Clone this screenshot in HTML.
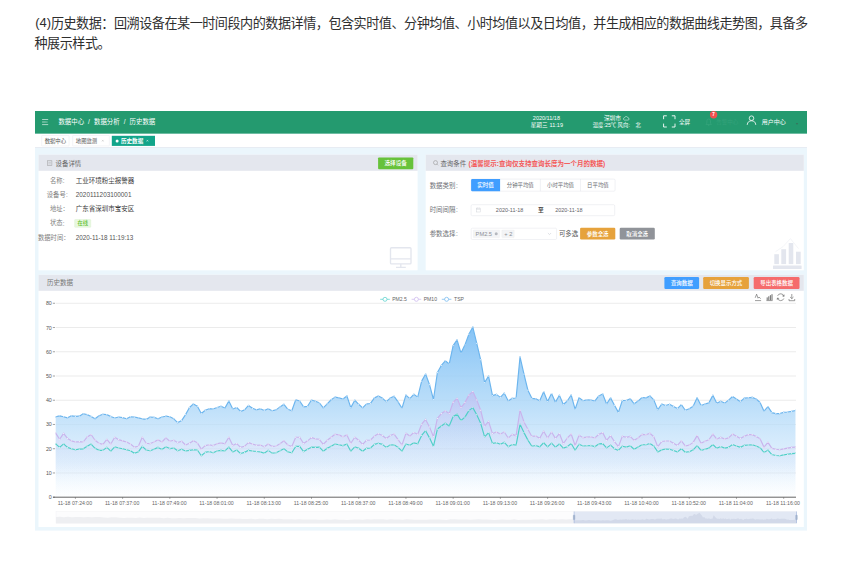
<!DOCTYPE html>
<html lang="zh"><head><meta charset="utf-8"><title>历史数据</title>
<style>
html,body{margin:0;padding:0;background:#fff;}
body{position:relative;width:844px;height:563px;overflow:hidden;font-family:"Liberation Sans","Noto Sans CJK SC",sans-serif;}
svg{display:block;}
svg text{font-family:"Liberation Sans","Noto Sans CJK SC",sans-serif;}
.sr{position:absolute;left:0;top:0;width:1px;height:1px;overflow:hidden;opacity:0;font-size:1px;line-height:1px;color:transparent;white-space:nowrap;}
</style></head><body>
<div class="sr">
<p>(4)历史数据：回溯设备在某一时间段内的数据详情，包含实时值、分钟均值、小时均值以及日均值，并生成相应的数据曲线走势图，具备多种展示样式。</p>
<p>数据中心 / 数据分析 / 历史数据 2020/11/18 星期三 11:19 深圳市 温度:25℃ 风向: 北 全屏 告警中心 7 用户中心</p>
<p>数据中心 地图监测 历史数据</p>
<p>设备详情 选择设备 名称: 工业环境粉尘报警器 设备号: 2020111203100001 地址： 广东省深圳市宝安区 状态: 在线 数据时间： 2020-11-18 11:19:13</p>
<p>查询条件 (温馨提示:查询仅支持查询长度为一个月的数据) 数据类别: 实时值 分钟平均值 小时平均值 日平均值 时间间隔: 2020-11-18 至 2020-11-18 参数选择: PM2.5 + 2 可多选 参数全选 取消全选</p>
<p>历史数据 查询数据 切换显示方式 导出表格数据 PM2.5 PM10 TSP 80 70 60 50 40 30 20 10 0</p>
<p>11-18 07:24:00 11-18 07:37:00 11-18 07:49:00 11-18 08:01:00 11-18 08:13:00 11-18 08:25:00 11-18 08:37:00 11-18 08:49:00 11-18 09:01:00 11-18 09:13:00 11-18 09:26:00 11-18 09:43:00 11-18 10:40:00 11-18 10:52:00 11-18 11:04:00 11-18 11:16:00</p>
</div>
<svg width="844" height="563" viewBox="0 0 844 563">
<defs><linearGradient id="ga" gradientUnits="userSpaceOnUse" x1="0" y1="327" x2="0" y2="497"><stop offset="0" stop-color="#7fc0f5" stop-opacity=".95"/><stop offset=".45" stop-color="#aad6f8" stop-opacity=".8"/><stop offset=".8" stop-color="#cfe7fc" stop-opacity=".6"/><stop offset="1" stop-color="#e8f4fe" stop-opacity=".05"/></linearGradient><linearGradient id="gb" gradientUnits="userSpaceOnUse" x1="0" y1="390" x2="0" y2="480"><stop offset="0" stop-color="#c5a9ee" stop-opacity=".45"/><stop offset="1" stop-color="#e9e0fa" stop-opacity="0"/></linearGradient><linearGradient id="gc" gradientUnits="userSpaceOnUse" x1="0" y1="407" x2="0" y2="497"><stop offset="0" stop-color="#8fc8f0" stop-opacity=".3"/><stop offset="1" stop-color="#dff0fa" stop-opacity="0"/></linearGradient><marker id="ma" markerWidth="2" markerHeight="2" refX="1" refY="1" markerUnits="userSpaceOnUse"><circle cx="1" cy="1" r=".68" fill="#fff" stroke="#6cb5ee" stroke-width=".25"/></marker><marker id="mb" markerWidth="2" markerHeight="2" refX="1" refY="1" markerUnits="userSpaceOnUse"><circle cx="1" cy="1" r=".68" fill="#fff" stroke="#c9b3ec" stroke-width=".25"/></marker><marker id="mc" markerWidth="2" markerHeight="2" refX="1" refY="1" markerUnits="userSpaceOnUse"><circle cx="1" cy="1" r=".68" fill="#fff" stroke="#4fcfc8" stroke-width=".25"/></marker></defs>
<g id="heading" aria-label="(4)历史数据：回溯设备在某一时间段内的数据详情，包含实时值、分钟均值、小时均值以及日均值，并生成相应的数据曲线走势图，具备多种展示样式。">
<text x="35.2" y="27.49" font-size="13" fill="#2e2e2e">(4)</text>
<text x="50.9" y="27.53" font-size="13.1" fill="#2e2e2e" letter-spacing="-0.48">历史数据：回溯设备在某一时间段内的数据详情，包含实时值、分钟均值、小时均值以及日均值，并生成相应的数据曲线走势图，具备多</text>
<text x="34.5" y="47.93" font-size="13.1" fill="#2e2e2e" letter-spacing="-0.48">种展示样式。</text>
</g>
<g id="shot">
<rect x="35" y="111" width="772" height="419.6" fill="#ebf6fc"/>
<rect x="35" y="111" width="772" height="22.8" fill="#249a6f"/>
<rect x="35" y="133.8" width="772" height="14" fill="#fff"/>
<rect x="35" y="147.2" width="772" height="0.8" fill="#e3e8f1"/>
<path d="M42.100 119.500h6.100M42.100 122h3.800M46.900 121.400v1.300M42.100 124.600h6.100" stroke="#fff" stroke-width=".75" fill="none" opacity=".8"/>
<text x="58.4" y="124.14" font-size="6.43" fill="#fff">数据中心</text>
<text x="87.9" y="124.14" font-size="6.43" fill="#fff">/</text>
<text x="94" y="124.14" font-size="6.43" fill="#fff">数据分析</text>
<text x="123.7" y="124.14" font-size="6.43" fill="#fff">/</text>
<text x="129.6" y="124.14" font-size="6.43" fill="#fff">历史数据</text>
<text x="532.84" y="120.17" font-size="5.5" fill="#fff">2020/11/18</text>
<text x="530.7" y="127.03" font-size="5.6" fill="#fff">星期三</text>
<text x="549.6" y="126.87" font-size="5.5" fill="#fff">11:19</text>
<text x="603.9" y="120.37" font-size="5.7" fill="#fff">深圳市</text>
<path d="M624.300 120.100h3.700a1.100 1.100 0 0 0 0-2.200a1.800 1.800 0 0 0-3.400-.3a1.300 1.300 0 0 0-.3 2.500z" fill="none" stroke="#fff" stroke-width=".5"/>
<text x="592.8" y="126.91" font-size="5.3" fill="#fff">温度</text>
<text x="603.6" y="126.83" font-size="5.4" fill="#fff">:25</text>
<text x="610.9" y="126.91" font-size="5.3" fill="#fff">℃</text>
<text x="617.6" y="126.91" font-size="5.3" fill="#fff">风向</text>
<text x="628.4" y="126.83" font-size="5.4" fill="#fff">:</text>
<text x="635.4" y="126.91" font-size="5.3" fill="#fff">北</text>
<path d="M663.6 119.2v-3.4h3.2M671.8 115.8h3.2v3.4M675 123.6v3.4h-3.2M666.8 127h-3.2v-3.4" fill="none" stroke="#fff" stroke-width=".9"/>
<text x="679" y="124.13" font-size="5.6" fill="#fff">全屏</text>
<path d="M706 124.4h5.4l-.9-1.2v-2.4a1.8 1.8 0 0 0-3.6 0v2.4zM708 125.3h1.4" fill="none" stroke="#3aa780" stroke-width=".6"/>
<text x="716.2" y="124.29" font-size="5.5" fill="#34a27b">告警中心</text>
<circle cx="713.6" cy="114.7" r="3.7" fill="#f0504f"/>
<text x="712.32" y="116.45" font-size="4.6" font-weight="bold" fill="#fff">7</text>
<circle cx="751.5" cy="118.2" r="2.3" fill="none" stroke="#fff" stroke-width=".8"/><path d="M747.2 124.9c.3-3 2-4.1 4.3-4.1s4 1.100 4.300 4.100" fill="none" stroke="#fff" stroke-width=".8"/>
<text x="761.8" y="123.68" font-size="6" fill="#fff">用户中心</text>
<path d="M795.8 123.2h2.400l-1.200 1.500z" fill="#3a6b58"/>
<rect x="41.7" y="135.5" width="27.4" height="10.4" rx="0.4" fill="#fff" stroke="#e2e5ea" stroke-width="0.4"/>
<text x="44.7" y="142.73" font-size="5.35" fill="#555">数据中心</text>
<rect x="72.7" y="135.5" width="36.7" height="10.4" rx="0.4" fill="#fff" stroke="#e2e5ea" stroke-width="0.4"/>
<text x="75.8" y="142.73" font-size="5.35" fill="#555">地图监测</text>
<path d="M102 139.9l1.6 1.600m0-1.600l-1.600 1.600" stroke="#aaa" stroke-width=".4"/>
<rect x="111.8" y="135.8" width="43.2" height="10.1" fill="#12a58a"/>
<circle cx="117.100" cy="140.9" r="1.500" fill="#fff"/>
<text x="121" y="143.01" font-size="5.55" font-weight="bold" fill="#fff">历史数据</text>
<path d="M146.600 139.9l1.600 1.600m0-1.600l-1.600 1.600" stroke="#fff" stroke-width=".45"/>
<rect x="38.5" y="154.8" width="379.1" height="115.5" fill="#fff"/>
<rect x="38.5" y="154.8" width="379.1" height="16" fill="#e4e7ee"/>
<rect x="425.7" y="154.8" width="378.1" height="115.5" fill="#fff"/>
<rect x="425.7" y="154.8" width="378.1" height="16" fill="#e4e7ee"/>
<rect x="38.5" y="274.7" width="765.3" height="252.3" fill="#fff"/>
<rect x="38.5" y="274.8" width="765.3" height="16" fill="#e4e7ee"/>
<rect x="47.300" y="160.8" width="4.600" height="4.600" fill="none" stroke="#999" stroke-width=".5"/><path d="M48.300 162.300h2.600M48.300 163.900h2.600" stroke="#999" stroke-width=".4"/>
<text x="55.6" y="165.54" font-size="6.43" fill="#666">设备详情</text>
<rect x="378.1" y="157.4" width="35.2" height="11.8" rx="0.9" fill="#67c23a"/>
<text x="384.5" y="165.43" font-size="5.6" font-weight="500" fill="#fff">选择设备</text>
<text x="49.9" y="182.89" font-size="6.3" fill="#808080">名称</text>
<text x="62.8" y="182.96" font-size="6.3" fill="#808080">:</text>
<text x="75.8" y="182.97" font-size="6.5" fill="#3a3a3a">工业环境粉尘报警器</text>
<text x="46.8" y="197.09" font-size="6.3" fill="#808080">设备号</text>
<text x="65.9" y="197.16" font-size="6.3" fill="#808080">:</text>
<text x="75.8" y="197.08" font-size="6.36" fill="#505050">2020111203100001</text>
<text x="49.9" y="211.29" font-size="6.3" fill="#808080">地址：</text>
<text x="75.8" y="211.37" font-size="6.5" fill="#3a3a3a">广东省深圳市宝安区</text>
<text x="49.9" y="225.49" font-size="6.3" fill="#808080">状态</text>
<text x="62.8" y="225.56" font-size="6.3" fill="#808080">:</text>
<rect x="74.6" y="219.5" width="16.2" height="7.8" rx="0.6" fill="#e8f7e0" stroke="#cfeebd" stroke-width="0.3"/>
<text x="77.4" y="225.41" font-size="5.3" font-weight="500" fill="#5fbf30">在线</text>
<text x="38" y="239.69" font-size="6.3" fill="#808080">数据时间：</text>
<text x="75.8" y="239.66" font-size="6.3" fill="#555">2020-11-18 11:19:13</text>
<g fill="none" stroke="#e3e6ee" stroke-width="1.350"><rect x="390.5" y="247.700" width="20.5" height="16.200" rx="1"/><path d="M390.5 258.8h20.5M400.8 264v3.300M396 267.400h9.800"/></g>
<g fill="#e3e6ee"><rect x="773" y="265.400" width="28.600" height="3.700" rx=".5"/><rect x="774.300" y="254.200" width="4.600" height="9.900"/><rect x="781.300" y="249.200" width="4.800" height="14.900"/><rect x="788.700" y="243" width="4.600" height="21.100"/><rect x="796" y="251.700" width="4.700" height="12.400"/></g>
<path d="M775.5 251.700l7.500-5l7.400-8.100l8.100 10" fill="none" stroke="#e9ebf1" stroke-width=".5"/>
<circle cx="435.500" cy="162.600" r="2" fill="none" stroke="#888" stroke-width=".5"/><path d="M436.900 164.100l1.200 1.200" stroke="#888" stroke-width=".5"/>
<text x="440.4" y="165.74" font-size="6.43" fill="#666">查询条件</text>
<text x="468.6" y="165.87" font-size="6.5" font-weight="bold" fill="#f45858">(温馨提示:查询仅支持查询长度为一个月的数据)</text>
<text x="429.7" y="187.64" font-size="6.43" fill="#707277">数据类别</text>
<text x="456" y="187.66" font-size="6.3" fill="#707277">:</text>
<text x="429.7" y="211.94" font-size="6.43" fill="#707277">时间间隔</text>
<text x="456" y="211.96" font-size="6.3" fill="#707277">:</text>
<text x="429.7" y="236.14" font-size="6.43" fill="#707277">参数选择</text>
<text x="456" y="236.16" font-size="6.3" fill="#707277">:</text>
<rect x="471.1" y="179.1" width="144" height="12.1" rx="1.2" fill="#fff" stroke="#dcdfe6" stroke-width="0.4"/>
<path d="M540.400 179.100v12.100M580.5 179.100v12.100" stroke="#dcdfe6" stroke-width=".4"/>
<path d="M472.300 179.100h27.800v12.100h-27.800a1.200 1.200 0 0 1-1.200-1.200v-9.700a1.200 1.200 0 0 1 1.200-1.200z" fill="#409eff"/>
<text x="477.35" y="187.29" font-size="5.5" font-weight="500" fill="#fff">实时值</text>
<text x="506.8" y="187.25" font-size="5.4" fill="#6b6e74">分钟平均值</text>
<text x="547" y="187.25" font-size="5.4" fill="#6b6e74">小时平均值</text>
<text x="587.1" y="187.25" font-size="5.4" fill="#6b6e74">日平均值</text>
<rect x="471.1" y="204.7" width="143.6" height="11" rx="1.2" fill="#fff" stroke="#dcdfe6" stroke-width="0.4"/>
<g fill="none" stroke="#cdd0d6" stroke-width=".45"><rect x="476.400" y="208.100" width="3.800" height="3.900"/><path d="M476.400 209.400h3.800M477.400 207.500v1.200M479.200 207.500v1.200"/></g>
<text x="495.86" y="212.25" font-size="5.45" fill="#5f6268">2020-11-18</text>
<text x="538.05" y="212.37" font-size="5.7" font-weight="bold" fill="#444">至</text>
<text x="555.16" y="212.25" font-size="5.45" fill="#5f6268">2020-11-18</text>
<rect x="471.2" y="228.2" width="85.4" height="11.3" rx="1.2" fill="#fff" stroke="#dcdfe6" stroke-width="0.4"/>
<rect x="473.3" y="229.9" width="26.4" height="7.8" rx="0.7" fill="#f3f4f6" stroke="#e9e9eb" stroke-width="0.3"/>
<text x="475.6" y="235.94" font-size="5.7" fill="#8c8f95">PM2.5</text>
<circle cx="496.200" cy="233.8" r="1.500" fill="#b5b8be"/>
<rect x="501.8" y="229.9" width="12.4" height="7.8" rx="0.7" fill="#f3f4f6" stroke="#e9e9eb" stroke-width="0.3"/>
<text x="504.36" y="235.94" font-size="5.7" fill="#8c8f95">+ 2</text>
<path d="M547.900 233l1.600 1.600l1.600-1.600" fill="none" stroke="#c0c4cc" stroke-width=".5"/>
<text x="558.9" y="235.94" font-size="6.43" fill="#555">可多选</text>
<rect x="580.1" y="227.7" width="35.2" height="11.8" rx="1.2" fill="#e6a23c"/>
<text x="586.8" y="235.77" font-size="5.45" font-weight="500" fill="#fff">参数全选</text>
<rect x="619.7" y="227.7" width="35.1" height="11.8" rx="1.2" fill="#909399"/>
<text x="626.3" y="235.77" font-size="5.45" font-weight="500" fill="#fff">取消全选</text>
<text x="46.9" y="285.39" font-size="6.55" fill="#777">历史数据</text>
<rect x="664.4" y="277.1" width="34.7" height="11.9" rx="1.2" fill="#409eff"/>
<text x="670.9" y="285.17" font-size="5.45" font-weight="500" fill="#fff">查询数据</text>
<rect x="703.2" y="277.1" width="45.7" height="11.9" rx="1.2" fill="#e6a23c"/>
<text x="709.65" y="285.17" font-size="5.45" font-weight="500" fill="#fff">切换显示方式</text>
<rect x="753.7" y="277.1" width="45.8" height="11.9" rx="1.2" fill="#f56c6c"/>
<text x="760.25" y="285.17" font-size="5.45" font-weight="500" fill="#fff">导出表格数据</text>
<path d="M55.7 472.96H796" stroke="#d6d6d6" stroke-width=".5"/>
<path d="M55.7 448.72H796" stroke="#d6d6d6" stroke-width=".5"/>
<path d="M55.7 424.48H796" stroke="#d6d6d6" stroke-width=".5"/>
<path d="M55.7 400.24H796" stroke="#d6d6d6" stroke-width=".5"/>
<path d="M55.7 376H796" stroke="#d6d6d6" stroke-width=".5"/>
<path d="M55.7 351.76H796" stroke="#d6d6d6" stroke-width=".5"/>
<path d="M55.7 327.52H796" stroke="#d6d6d6" stroke-width=".5"/>
<path d="M55.7 303.28H796" stroke="#d6d6d6" stroke-width=".5"/>
<text x="48.85" y="499.2" font-size="5.3" fill="#555">0</text>
<path d="M52.800 497.2h2.200" stroke="#666" stroke-width=".6"/>
<text x="45.9" y="474.96" font-size="5.3" fill="#555">10</text>
<path d="M52.800 472.96h2.200" stroke="#666" stroke-width=".6"/>
<text x="45.9" y="450.72" font-size="5.3" fill="#555">20</text>
<path d="M52.800 448.72h2.200" stroke="#666" stroke-width=".6"/>
<text x="45.9" y="426.48" font-size="5.3" fill="#555">30</text>
<path d="M52.800 424.48h2.200" stroke="#666" stroke-width=".6"/>
<text x="45.9" y="402.24" font-size="5.3" fill="#555">40</text>
<path d="M52.800 400.24h2.200" stroke="#666" stroke-width=".6"/>
<text x="45.9" y="378" font-size="5.3" fill="#555">50</text>
<path d="M52.800 376h2.200" stroke="#666" stroke-width=".6"/>
<text x="45.9" y="353.76" font-size="5.3" fill="#555">60</text>
<path d="M52.800 351.76h2.200" stroke="#666" stroke-width=".6"/>
<text x="45.9" y="329.52" font-size="5.3" fill="#555">70</text>
<path d="M52.800 327.52h2.200" stroke="#666" stroke-width=".6"/>
<text x="45.9" y="305.28" font-size="5.3" fill="#555">80</text>
<path d="M52.800 303.28h2.200" stroke="#666" stroke-width=".6"/>
<path d="M55.7 497.2 L55.7 416.79 59.64 415.83 63.57 416.79 67.5 417.86 71.44 415.83 75.38 416.43 79.31 416.19 83.25 413.81 87.18 414.64 91.12 416.43 95.05 418.81 98.99 415.83 102.92 414.29 106.86 414.64 110.79 416.43 114.72 417.98 118.66 417.02 122.59 417.62 126.53 418.81 130.47 416.79 134.4 417.02 138.34 417.86 142.27 418.81 146.2 419.4 150.14 417.02 154.07 417.38 158.01 418.81 161.94 417.02 165.88 416.19 169.81 416.79 173.75 418.81 177.69 422.62 181.62 420.6 185.56 414.64 189.49 407.5 193.43 403.93 197.36 406.31 201.3 413.45 205.23 410.24 209.17 408.69 213.1 409.05 217.04 407.5 220.97 406.31 224.91 408.1 228.84 400.95 232.77 409.05 236.71 407.5 240.64 411.43 244.58 409.88 248.51 405.48 252.45 408.33 256.38 409.88 260.32 408.69 264.25 410.48 268.19 408.69 272.12 410.71 276.06 409.88 280 406.9 283.93 404.29 287.87 409.29 291.8 410.71 295.74 399.76 299.67 400.95 303.61 406.9 307.54 406.31 311.48 400 315.41 401.19 319.34 402.74 323.28 407.86 327.21 403.93 331.15 399.76 335.08 397.14 339.02 397.86 342.95 399.05 346.89 395.95 350.82 407.62 354.76 400.24 358.69 404.29 362.63 407.86 366.56 403.81 370.5 403.45 374.44 397.86 378.37 395.95 382.31 398.1 386.24 401.67 390.18 398.1 394.11 396.31 398.05 401.9 401.98 408.21 405.92 395.12 409.85 398.69 413.78 394.29 417.72 397.14 421.65 381.12 425.59 374.01 429.52 384.67 433.46 399.5 437.39 372.59 441.33 365.48 445.26 360.78 449.2 364.05 453.13 345.57 457.07 339.88 461 353.11 464.94 344.86 468.88 334.2 472.81 327.09 476.75 343.44 480.68 359.79 484.62 382.54 488.55 376.14 492.49 395.6 496.42 394.4 500.36 397.38 504.29 393.21 508.23 400.95 512.16 398.33 516.1 397.98 520.03 356.9 523.97 374.17 527.9 390.24 531.84 398.33 535.77 398.81 539.71 400.71 543.64 391.67 547.58 401.55 551.51 393.57 555.45 402.14 559.38 395.24 563.32 404.52 567.25 400.95 571.19 395 575.12 409.29 579.06 397.62 582.99 400.71 586.93 399.76 590.86 400 594.8 401.07 598.73 395.95 602.67 393.93 606.6 404.05 610.54 397.86 614.47 405.24 618.41 412.38 622.34 400.48 626.28 400.48 630.21 398.69 634.15 403.81 638.08 401.07 642.02 397.5 645.95 397.86 649.89 395.95 653.82 399.88 657.76 409.76 661.69 404.05 665.62 405.48 669.56 404.29 673.5 406.43 677.43 408.57 681.37 404.64 685.3 410.24 689.24 408.81 693.17 406.19 697.11 397.86 701.04 405.48 704.98 404.05 708.91 402.86 712.85 395.36 716.78 403.33 720.72 401.31 724.65 403.1 728.59 400.12 732.52 396.55 736.46 398.93 740.39 401.67 744.33 398.1 748.26 397.74 752.2 397.38 756.13 398.93 760.07 402.5 764 411.19 767.94 406.67 771.87 412.62 775.81 413.57 779.74 413.57 783.68 412.38 787.61 412.02 791.55 411.43 795.48 410.48 L795.48 497.2z" fill="url(#ga)"/>
<path d="M55.7 497.2 L55.7 433.1 59.64 439.29 63.57 433.33 67.5 438.45 71.44 440.83 75.38 442.02 79.31 441.67 83.25 442.02 87.18 436.9 91.12 434.52 95.05 440.24 98.99 443.21 102.92 444.4 106.86 439.29 110.79 444.05 114.72 437.26 118.66 439.64 122.59 440.83 126.53 442.02 130.47 444.05 134.4 447.14 138.34 446.19 142.27 437.26 146.2 443.21 150.14 443.57 154.07 442.02 158.01 439.64 161.94 442.02 165.88 437.86 169.81 441.19 173.75 440.24 177.69 442.62 181.62 441.19 185.56 445 189.49 443.21 193.43 440.83 197.36 442.86 201.3 449.17 205.23 445.6 209.17 444.76 213.1 445.6 217.04 443.81 220.97 442.86 224.91 443.81 228.84 437.26 232.77 445.6 236.71 443.57 240.64 447.38 244.58 446.19 248.51 442.62 252.45 444.05 256.38 445.24 260.32 445 264.25 446.79 268.19 444.05 272.12 446.43 276.06 445.95 280 443.81 283.93 440.83 287.87 445 291.8 446.43 295.74 437.26 299.67 437.26 303.61 443.57 307.54 440.83 311.48 437.62 315.41 438.81 319.34 439.29 323.28 444.4 327.21 440.24 331.15 437.26 335.08 434.29 339.02 434.88 342.95 436.67 346.89 434.88 350.82 443.21 354.76 437.26 358.69 440.24 362.63 444.4 366.56 440.24 370.5 440 374.44 436.07 378.37 433.69 382.31 435.48 386.24 438.45 390.18 435.48 394.11 434.05 398.05 439.64 401.98 445 405.92 433.33 409.85 436.07 413.78 432.5 417.72 434.29 421.65 424.17 425.59 419.4 429.52 426.9 433.46 436.79 437.39 418.33 441.33 413.57 445.26 410.95 449.2 413.57 453.13 402.26 457.07 398.33 461 407.62 464.94 402.62 468.88 395.12 472.81 391.55 476.75 399.88 480.68 410.24 484.62 426.07 488.55 421.31 492.49 433.57 496.42 432.02 500.36 434.05 504.29 432.02 508.23 437.98 512.16 434.4 516.1 435.6 520.03 410.24 523.97 421.9 527.9 429.29 531.84 436.43 535.77 435.95 539.71 438.33 543.64 431.19 547.58 437.98 551.51 432.02 555.45 438.33 559.38 433.57 563.32 443.57 567.25 437.98 571.19 434.05 575.12 445.48 579.06 435.24 582.99 437.62 586.93 437.14 590.86 436.79 594.8 437.98 598.73 434.4 602.67 432.62 606.6 440.36 610.54 435.6 614.47 441.55 618.41 446.67 622.34 436.19 626.28 437.38 630.21 436.43 634.15 440.36 638.08 437.98 642.02 434.4 645.95 434.76 649.89 433.21 653.82 436.79 657.76 446.67 661.69 441.55 665.62 440.95 669.56 440.95 673.5 443.33 677.43 445.48 681.37 440.95 685.3 445.95 689.24 445.12 693.17 442.38 697.11 435.6 701.04 443.33 704.98 441.19 708.91 439.76 712.85 434.05 716.78 439.05 720.72 437.38 724.65 439.05 728.59 437.86 732.52 434.05 736.46 436.19 740.39 438.57 744.33 436.19 748.26 434.64 752.2 434.64 756.13 436.43 760.07 438.81 764 447.14 767.94 442.38 771.87 448.33 775.81 449.29 779.74 449.76 783.68 448.93 787.61 448.1 791.55 447.38 795.48 447.14 L795.48 497.2z" fill="url(#gb)"/>
<path d="M55.7 497.2 L55.7 443.81 59.64 447.38 63.57 443.81 67.5 447.38 71.44 448.81 75.38 449.76 79.31 449.17 83.25 448.81 87.18 446.19 91.12 444.05 95.05 448.33 98.99 450.36 102.92 450.36 106.86 447.38 110.79 451.19 114.72 446.79 118.66 447.98 122.59 448.81 126.53 449.76 130.47 450.71 134.4 453.33 138.34 451.9 142.27 446.43 146.2 450 150.14 450.71 154.07 449.17 158.01 447.38 161.94 449.52 165.88 446.79 169.81 448.57 173.75 447.98 177.69 450.71 181.62 449.17 185.56 450.95 189.49 450.36 193.43 449.76 197.36 450 201.3 455.71 205.23 452.38 209.17 451.55 213.1 452.74 217.04 450.95 220.97 450.36 224.91 450.95 228.84 447.14 232.77 451.9 236.71 450 240.64 453.57 244.58 452.38 248.51 450.36 252.45 450.95 256.38 451.55 260.32 451.9 264.25 453.33 268.19 450.36 272.12 453.1 276.06 452.74 280 450.71 283.93 448.81 287.87 451.9 291.8 452.74 295.74 446.43 299.67 446.43 303.61 451.55 307.54 449.17 311.48 447.14 315.41 447.38 319.34 447.14 323.28 451.19 327.21 448.33 331.15 446.19 335.08 444.05 339.02 444.76 342.95 445.6 346.89 444.05 350.82 451.19 354.76 446.79 358.69 448.33 362.63 451.19 366.56 448.33 370.5 447.98 374.44 444.4 378.37 443.21 382.31 444.4 386.24 447.38 390.18 445 394.11 444.76 398.05 447.38 401.98 451.19 405.92 444.05 409.85 445.24 413.78 442.86 417.72 443.81 421.65 435.48 425.59 430.71 429.52 437.86 433.46 446.31 437.39 429.05 441.33 426.07 445.26 423.33 449.2 426.07 453.13 416.55 457.07 414.17 461 420.48 464.94 417.14 468.88 410.6 472.81 407.62 476.75 414.76 480.68 423.33 484.62 436.79 488.55 432.62 492.49 443.33 496.42 442.74 500.36 444.29 504.29 442.38 508.23 446.67 512.16 444.52 516.1 445.12 520.03 424.29 523.97 432.62 527.9 440.12 531.84 446.31 535.77 445.48 539.71 446.9 543.64 442.74 547.58 446.9 551.51 443.1 555.45 447.14 559.38 443.93 563.32 448.1 567.25 446.67 571.19 443.57 575.12 450.24 579.06 444.29 582.99 445.95 586.93 445.71 590.86 445.48 594.8 446.67 598.73 443.93 602.67 443.57 606.6 447.86 610.54 445.12 614.47 448.69 618.41 450.48 622.34 446.19 626.28 447.14 630.21 445.71 634.15 449.29 638.08 446.9 642.02 444.76 645.95 444.76 649.89 443.57 653.82 445.95 657.76 451.9 661.69 449.88 665.62 449.05 669.56 449.29 673.5 450.48 677.43 451.9 681.37 448.69 685.3 452.26 689.24 451.67 693.17 449.88 697.11 445.71 701.04 450.48 704.98 449.29 708.91 448.1 712.85 444.52 716.78 448.33 720.72 446.55 724.65 448.1 728.59 447.38 732.52 444.52 736.46 445.95 740.39 447.38 744.33 445.36 748.26 445 752.2 444.76 756.13 445.95 760.07 447.74 764 452.5 767.94 450.12 771.87 454.52 775.81 455.48 779.74 455.71 783.68 454.88 787.61 454.29 791.55 453.69 795.48 453.33 L795.48 497.2z" fill="url(#gc)"/>
<polyline points="55.7,416.79 59.64,415.83 63.57,416.79 67.5,417.86 71.44,415.83 75.38,416.43 79.31,416.19 83.25,413.81 87.18,414.64 91.12,416.43 95.05,418.81 98.99,415.83 102.92,414.29 106.86,414.64 110.79,416.43 114.72,417.98 118.66,417.02 122.59,417.62 126.53,418.81 130.47,416.79 134.4,417.02 138.34,417.86 142.27,418.81 146.2,419.4 150.14,417.02 154.07,417.38 158.01,418.81 161.94,417.02 165.88,416.19 169.81,416.79 173.75,418.81 177.69,422.62 181.62,420.6 185.56,414.64 189.49,407.5 193.43,403.93 197.36,406.31 201.3,413.45 205.23,410.24 209.17,408.69 213.1,409.05 217.04,407.5 220.97,406.31 224.91,408.1 228.84,400.95 232.77,409.05 236.71,407.5 240.64,411.43 244.58,409.88 248.51,405.48 252.45,408.33 256.38,409.88 260.32,408.69 264.25,410.48 268.19,408.69 272.12,410.71 276.06,409.88 280,406.9 283.93,404.29 287.87,409.29 291.8,410.71 295.74,399.76 299.67,400.95 303.61,406.9 307.54,406.31 311.48,400 315.41,401.19 319.34,402.74 323.28,407.86 327.21,403.93 331.15,399.76 335.08,397.14 339.02,397.86 342.95,399.05 346.89,395.95 350.82,407.62 354.76,400.24 358.69,404.29 362.63,407.86 366.56,403.81 370.5,403.45 374.44,397.86 378.37,395.95 382.31,398.1 386.24,401.67 390.18,398.1 394.11,396.31 398.05,401.9 401.98,408.21 405.92,395.12 409.85,398.69 413.78,394.29 417.72,397.14 421.65,381.12 425.59,374.01 429.52,384.67 433.46,399.5 437.39,372.59 441.33,365.48 445.26,360.78 449.2,364.05 453.13,345.57 457.07,339.88 461,353.11 464.94,344.86 468.88,334.2 472.81,327.09 476.75,343.44 480.68,359.79 484.62,382.54 488.55,376.14 492.49,395.6 496.42,394.4 500.36,397.38 504.29,393.21 508.23,400.95 512.16,398.33 516.1,397.98 520.03,356.9 523.97,374.17 527.9,390.24 531.84,398.33 535.77,398.81 539.71,400.71 543.64,391.67 547.58,401.55 551.51,393.57 555.45,402.14 559.38,395.24 563.32,404.52 567.25,400.95 571.19,395 575.12,409.29 579.06,397.62 582.99,400.71 586.93,399.76 590.86,400 594.8,401.07 598.73,395.95 602.67,393.93 606.6,404.05 610.54,397.86 614.47,405.24 618.41,412.38 622.34,400.48 626.28,400.48 630.21,398.69 634.15,403.81 638.08,401.07 642.02,397.5 645.95,397.86 649.89,395.95 653.82,399.88 657.76,409.76 661.69,404.05 665.62,405.48 669.56,404.29 673.5,406.43 677.43,408.57 681.37,404.64 685.3,410.24 689.24,408.81 693.17,406.19 697.11,397.86 701.04,405.48 704.98,404.05 708.91,402.86 712.85,395.36 716.78,403.33 720.72,401.31 724.65,403.1 728.59,400.12 732.52,396.55 736.46,398.93 740.39,401.67 744.33,398.1 748.26,397.74 752.2,397.38 756.13,398.93 760.07,402.5 764,411.19 767.94,406.67 771.87,412.62 775.81,413.57 779.74,413.57 783.68,412.38 787.61,412.02 791.55,411.43 795.48,410.48" fill="none" stroke="#6cb5ee" stroke-width="1.15" stroke-linejoin="round" marker-start="url(#ma)" marker-mid="url(#ma)" marker-end="url(#ma)"/>
<polyline points="55.7,433.1 59.64,439.29 63.57,433.33 67.5,438.45 71.44,440.83 75.38,442.02 79.31,441.67 83.25,442.02 87.18,436.9 91.12,434.52 95.05,440.24 98.99,443.21 102.92,444.4 106.86,439.29 110.79,444.05 114.72,437.26 118.66,439.64 122.59,440.83 126.53,442.02 130.47,444.05 134.4,447.14 138.34,446.19 142.27,437.26 146.2,443.21 150.14,443.57 154.07,442.02 158.01,439.64 161.94,442.02 165.88,437.86 169.81,441.19 173.75,440.24 177.69,442.62 181.62,441.19 185.56,445 189.49,443.21 193.43,440.83 197.36,442.86 201.3,449.17 205.23,445.6 209.17,444.76 213.1,445.6 217.04,443.81 220.97,442.86 224.91,443.81 228.84,437.26 232.77,445.6 236.71,443.57 240.64,447.38 244.58,446.19 248.51,442.62 252.45,444.05 256.38,445.24 260.32,445 264.25,446.79 268.19,444.05 272.12,446.43 276.06,445.95 280,443.81 283.93,440.83 287.87,445 291.8,446.43 295.74,437.26 299.67,437.26 303.61,443.57 307.54,440.83 311.48,437.62 315.41,438.81 319.34,439.29 323.28,444.4 327.21,440.24 331.15,437.26 335.08,434.29 339.02,434.88 342.95,436.67 346.89,434.88 350.82,443.21 354.76,437.26 358.69,440.24 362.63,444.4 366.56,440.24 370.5,440 374.44,436.07 378.37,433.69 382.31,435.48 386.24,438.45 390.18,435.48 394.11,434.05 398.05,439.64 401.98,445 405.92,433.33 409.85,436.07 413.78,432.5 417.72,434.29 421.65,424.17 425.59,419.4 429.52,426.9 433.46,436.79 437.39,418.33 441.33,413.57 445.26,410.95 449.2,413.57 453.13,402.26 457.07,398.33 461,407.62 464.94,402.62 468.88,395.12 472.81,391.55 476.75,399.88 480.68,410.24 484.62,426.07 488.55,421.31 492.49,433.57 496.42,432.02 500.36,434.05 504.29,432.02 508.23,437.98 512.16,434.4 516.1,435.6 520.03,410.24 523.97,421.9 527.9,429.29 531.84,436.43 535.77,435.95 539.71,438.33 543.64,431.19 547.58,437.98 551.51,432.02 555.45,438.33 559.38,433.57 563.32,443.57 567.25,437.98 571.19,434.05 575.12,445.48 579.06,435.24 582.99,437.62 586.93,437.14 590.86,436.79 594.8,437.98 598.73,434.4 602.67,432.62 606.6,440.36 610.54,435.6 614.47,441.55 618.41,446.67 622.34,436.19 626.28,437.38 630.21,436.43 634.15,440.36 638.08,437.98 642.02,434.4 645.95,434.76 649.89,433.21 653.82,436.79 657.76,446.67 661.69,441.55 665.62,440.95 669.56,440.95 673.5,443.33 677.43,445.48 681.37,440.95 685.3,445.95 689.24,445.12 693.17,442.38 697.11,435.6 701.04,443.33 704.98,441.19 708.91,439.76 712.85,434.05 716.78,439.05 720.72,437.38 724.65,439.05 728.59,437.86 732.52,434.05 736.46,436.19 740.39,438.57 744.33,436.19 748.26,434.64 752.2,434.64 756.13,436.43 760.07,438.81 764,447.14 767.94,442.38 771.87,448.33 775.81,449.29 779.74,449.76 783.68,448.93 787.61,448.1 791.55,447.38 795.48,447.14" fill="none" stroke="#c9b3ec" stroke-width="1.15" stroke-linejoin="round" marker-start="url(#mb)" marker-mid="url(#mb)" marker-end="url(#mb)"/>
<polyline points="55.7,443.81 59.64,447.38 63.57,443.81 67.5,447.38 71.44,448.81 75.38,449.76 79.31,449.17 83.25,448.81 87.18,446.19 91.12,444.05 95.05,448.33 98.99,450.36 102.92,450.36 106.86,447.38 110.79,451.19 114.72,446.79 118.66,447.98 122.59,448.81 126.53,449.76 130.47,450.71 134.4,453.33 138.34,451.9 142.27,446.43 146.2,450 150.14,450.71 154.07,449.17 158.01,447.38 161.94,449.52 165.88,446.79 169.81,448.57 173.75,447.98 177.69,450.71 181.62,449.17 185.56,450.95 189.49,450.36 193.43,449.76 197.36,450 201.3,455.71 205.23,452.38 209.17,451.55 213.1,452.74 217.04,450.95 220.97,450.36 224.91,450.95 228.84,447.14 232.77,451.9 236.71,450 240.64,453.57 244.58,452.38 248.51,450.36 252.45,450.95 256.38,451.55 260.32,451.9 264.25,453.33 268.19,450.36 272.12,453.1 276.06,452.74 280,450.71 283.93,448.81 287.87,451.9 291.8,452.74 295.74,446.43 299.67,446.43 303.61,451.55 307.54,449.17 311.48,447.14 315.41,447.38 319.34,447.14 323.28,451.19 327.21,448.33 331.15,446.19 335.08,444.05 339.02,444.76 342.95,445.6 346.89,444.05 350.82,451.19 354.76,446.79 358.69,448.33 362.63,451.19 366.56,448.33 370.5,447.98 374.44,444.4 378.37,443.21 382.31,444.4 386.24,447.38 390.18,445 394.11,444.76 398.05,447.38 401.98,451.19 405.92,444.05 409.85,445.24 413.78,442.86 417.72,443.81 421.65,435.48 425.59,430.71 429.52,437.86 433.46,446.31 437.39,429.05 441.33,426.07 445.26,423.33 449.2,426.07 453.13,416.55 457.07,414.17 461,420.48 464.94,417.14 468.88,410.6 472.81,407.62 476.75,414.76 480.68,423.33 484.62,436.79 488.55,432.62 492.49,443.33 496.42,442.74 500.36,444.29 504.29,442.38 508.23,446.67 512.16,444.52 516.1,445.12 520.03,424.29 523.97,432.62 527.9,440.12 531.84,446.31 535.77,445.48 539.71,446.9 543.64,442.74 547.58,446.9 551.51,443.1 555.45,447.14 559.38,443.93 563.32,448.1 567.25,446.67 571.19,443.57 575.12,450.24 579.06,444.29 582.99,445.95 586.93,445.71 590.86,445.48 594.8,446.67 598.73,443.93 602.67,443.57 606.6,447.86 610.54,445.12 614.47,448.69 618.41,450.48 622.34,446.19 626.28,447.14 630.21,445.71 634.15,449.29 638.08,446.9 642.02,444.76 645.95,444.76 649.89,443.57 653.82,445.95 657.76,451.9 661.69,449.88 665.62,449.05 669.56,449.29 673.5,450.48 677.43,451.9 681.37,448.69 685.3,452.26 689.24,451.67 693.17,449.88 697.11,445.71 701.04,450.48 704.98,449.29 708.91,448.1 712.85,444.52 716.78,448.33 720.72,446.55 724.65,448.1 728.59,447.38 732.52,444.52 736.46,445.95 740.39,447.38 744.33,445.36 748.26,445 752.2,444.76 756.13,445.95 760.07,447.74 764,452.5 767.94,450.12 771.87,454.52 775.81,455.48 779.74,455.71 783.68,454.88 787.61,454.29 791.55,453.69 795.48,453.33" fill="none" stroke="#4fcfc8" stroke-width="1.15" stroke-linejoin="round" marker-start="url(#mc)" marker-mid="url(#mc)" marker-end="url(#mc)"/>
<path d="M53 497.2H796" stroke="#484848" stroke-width=".85"/>
<path d="M75.4 497.2v1.800" stroke="#555" stroke-width=".45"/>
<text x="57.67" y="504.65" font-size="5.18" fill="#666">11-18 07:24:00</text>
<path d="M122.62 497.2v1.800" stroke="#555" stroke-width=".45"/>
<text x="104.89" y="504.65" font-size="5.18" fill="#666">11-18 07:37:00</text>
<path d="M169.84 497.2v1.800" stroke="#555" stroke-width=".45"/>
<text x="152.11" y="504.65" font-size="5.18" fill="#666">11-18 07:49:00</text>
<path d="M217.06 497.2v1.800" stroke="#555" stroke-width=".45"/>
<text x="199.33" y="504.65" font-size="5.18" fill="#666">11-18 08:01:00</text>
<path d="M264.28 497.2v1.800" stroke="#555" stroke-width=".45"/>
<text x="246.55" y="504.65" font-size="5.18" fill="#666">11-18 08:13:00</text>
<path d="M311.5 497.2v1.800" stroke="#555" stroke-width=".45"/>
<text x="293.77" y="504.65" font-size="5.18" fill="#666">11-18 08:25:00</text>
<path d="M358.72 497.2v1.800" stroke="#555" stroke-width=".45"/>
<text x="340.99" y="504.65" font-size="5.18" fill="#666">11-18 08:37:00</text>
<path d="M405.94 497.2v1.800" stroke="#555" stroke-width=".45"/>
<text x="388.21" y="504.65" font-size="5.18" fill="#666">11-18 08:49:00</text>
<path d="M453.16 497.2v1.800" stroke="#555" stroke-width=".45"/>
<text x="435.43" y="504.65" font-size="5.18" fill="#666">11-18 09:01:00</text>
<path d="M500.38 497.2v1.800" stroke="#555" stroke-width=".45"/>
<text x="482.65" y="504.65" font-size="5.18" fill="#666">11-18 09:13:00</text>
<path d="M547.6 497.2v1.800" stroke="#555" stroke-width=".45"/>
<text x="529.87" y="504.65" font-size="5.18" fill="#666">11-18 09:26:00</text>
<path d="M594.82 497.2v1.800" stroke="#555" stroke-width=".45"/>
<text x="577.09" y="504.65" font-size="5.18" fill="#666">11-18 09:43:00</text>
<path d="M642.04 497.2v1.800" stroke="#555" stroke-width=".45"/>
<text x="624.31" y="504.65" font-size="5.18" fill="#666">11-18 10:40:00</text>
<path d="M689.26 497.2v1.800" stroke="#555" stroke-width=".45"/>
<text x="671.53" y="504.65" font-size="5.18" fill="#666">11-18 10:52:00</text>
<path d="M736.48 497.2v1.800" stroke="#555" stroke-width=".45"/>
<text x="718.75" y="504.65" font-size="5.18" fill="#666">11-18 11:04:00</text>
<path d="M783.7 497.2v1.800" stroke="#555" stroke-width=".45"/>
<text x="765.97" y="504.65" font-size="5.18" fill="#666">11-18 11:16:00</text>
<path d="M380.2 299.300h9.600" stroke="#4fcfc8" stroke-width=".7"/><circle cx="385" cy="299.300" r="2" fill="#fff" stroke="#4fcfc8" stroke-width=".7"/>
<text x="392.2" y="300.73" font-size="5.1" fill="#666">PM2.5</text>
<path d="M411.6 299.300h9.600" stroke="#c9b3ec" stroke-width=".7"/><circle cx="416.4" cy="299.300" r="2" fill="#fff" stroke="#c9b3ec" stroke-width=".7"/>
<text x="423.7" y="300.73" font-size="5.1" fill="#666">PM10</text>
<path d="M441.8 299.300h9.600" stroke="#6cb5ee" stroke-width=".7"/><circle cx="446.6" cy="299.300" r="2" fill="#fff" stroke="#6cb5ee" stroke-width=".7"/>
<text x="454.1" y="300.73" font-size="5.1" fill="#666">TSP</text>
<g fill="none" stroke="#5c5c5c" stroke-width=".6"><path d="M755.2 297.8l1.400-3.600l1.400 4l1.100-1.200l1.500 1.700M755 300.600h6.100"/><path d="M766.400 300.600h6.200"/><path d="M767.200 300.200v-2.800M768.800 300.200v-3.900M770.400 300.200v-5M772 300.200v-6" stroke-width=".9"/><path d="M783.900 296.300a3.300 3.300 0 0 0-6.300-.4M777.500 298.100a3.300 3.300 0 0 0 6.300.4M784.200 294.600l-.2 1.800l-1.700-.5M777.200 299.800l.2-1.800l1.700.5"/><path d="M791.800 294v4.500M790.100 297l1.700 1.700l1.700-1.700M789 299v1.700h5.700v-1.700"/></g>
<rect x="56" y="511.5" width="740.5" height="11.7" fill="#fcfcfd" stroke="#eff0f3" stroke-width="0.4"/>
<path d="M56 523.2L56 516.88 59.99 516.79 63.97 517.18 67.96 516.81 71.94 517.17 75.93 517.09 79.91 516.91 83.9 517.27 87.88 516.97 91.87 517.29 95.85 517.07 99.84 517.12 103.82 517.39 107.81 517.71 111.8 517.26 115.78 517.36 119.77 517.68 123.75 517.94 127.74 517.72 131.72 517.63 135.71 518.08 139.69 517.46 143.68 518.07 147.66 517.71 151.65 517.64 155.63 517.66 159.62 517.83 163.61 518.22 167.59 517.82 171.58 518.13 175.56 518.21 179.55 518.06 183.53 518.22 187.52 517.92 191.5 517.95 195.49 518.09 199.47 518.46 203.46 518.32 207.44 518.28 211.43 518.51 215.42 518.45 219.4 518.38 223.39 518.77 227.37 518.74 231.36 518.46 235.34 518.72 239.33 518.73 243.31 519.01 247.3 518.94 251.28 518.67 255.27 519.19 259.25 518.63 263.24 518.87 267.23 519.15 271.21 518.76 275.2 519.04 279.18 518.76 283.17 519.23 287.15 519.34 291.14 519.24 295.12 519.49 299.11 519.14 303.09 519.44 307.08 519.41 311.06 519.43 315.05 519.38 319.04 519.69 323.02 519.8 327.01 519.51 330.99 519.68 334.98 519.29 338.96 519.74 342.95 519.7 346.93 519.95 350.92 519.83 354.9 519.45 358.89 519.52 362.87 519.72 366.86 519.27 370.85 519.57 374.83 519.37 378.82 519.33 382.8 519.29 386.79 519.79 390.77 519.34 394.76 519.42 398.74 519.52 402.73 519.86 406.71 519.31 410.7 519.56 414.68 519.63 418.67 519.87 422.66 519.82 426.64 519.85 430.63 519.44 434.61 519.54 438.6 519.5 442.58 519.87 446.57 519.92 450.55 519.36 454.54 519.37 458.52 519.41 462.51 519.41 466.49 519.59 470.48 519.66 474.47 519.43 478.45 519.25 482.44 519.54 486.42 519.51 490.41 519.65 494.39 519.92 498.38 519.73 502.36 519.61 506.35 519.68 510.33 519.72 514.32 519.29 518.3 519.88 522.29 519.8 526.28 519.86 530.26 519.81 534.25 519.52 538.23 519.53 542.22 519.32 546.2 519.69 550.19 519.29 554.17 519.3 558.16 519.4 562.14 519.36 566.13 519.49 570.11 519.29 574.1 519.25 L574.1 523.2z" fill="#eeeff2"/>
<rect x="574.1" y="511.5" width="222.4" height="11.7" fill="#dfe6f3" opacity="0.92"/>
<path d="M574.1 523.2L574.1 520.27 575.28 520.19 576.47 520.27 577.65 520.35 578.83 520.19 580.01 520.24 581.2 520.22 582.38 520.02 583.56 520.09 584.75 520.24 585.93 520.43 587.11 520.19 588.3 520.06 589.48 520.09 590.66 520.24 591.84 520.36 593.03 520.28 594.21 520.33 595.39 520.43 596.58 520.27 597.76 520.28 598.94 520.35 600.13 520.43 601.31 520.48 602.49 520.28 603.67 520.31 604.86 520.43 606.04 520.28 607.22 520.22 608.41 520.27 609.59 520.43 610.77 520.75 611.96 520.58 613.14 520.09 614.32 519.5 615.5 519.2 616.69 519.4 617.87 519.99 619.05 519.72 620.24 519.6 621.42 519.63 622.6 519.5 623.79 519.4 624.97 519.55 626.15 518.96 627.33 519.63 628.52 519.5 629.7 519.82 630.88 519.7 632.07 519.33 633.25 519.57 634.43 519.7 635.61 519.6 636.8 519.74 637.98 519.6 639.16 519.76 640.35 519.7 641.53 519.45 642.71 519.23 643.9 519.65 645.08 519.76 646.26 518.86 647.44 518.96 648.63 519.45 649.81 519.4 650.99 518.88 652.18 518.98 653.36 519.11 654.54 519.53 655.73 519.2 656.91 518.86 658.09 518.64 659.27 518.7 660.46 518.8 661.64 518.55 662.82 519.51 664.01 518.9 665.19 519.23 666.37 519.53 667.56 519.19 668.74 519.17 669.92 518.7 671.1 518.55 672.29 518.72 673.47 519.02 674.65 518.72 675.84 518.58 677.02 519.04 678.2 519.56 679.39 518.48 680.57 518.77 681.75 518.41 682.93 518.64 684.12 517.32 685.3 516.74 686.48 517.62 687.67 518.84 688.85 516.62 690.03 516.03 691.21 515.64 692.4 515.91 693.58 514.39 694.76 513.92 695.95 515.01 697.13 514.33 698.31 513.45 699.5 512.86 700.68 514.21 701.86 515.56 703.04 517.44 704.23 516.91 705.41 518.52 706.59 518.42 707.78 518.66 708.96 518.32 710.14 518.96 711.33 518.74 712.51 518.71 713.69 515.32 714.87 516.75 716.06 518.07 717.24 518.74 718.42 518.78 719.61 518.94 720.79 518.19 721.97 519.01 723.16 518.35 724.34 519.06 725.52 518.49 726.7 519.25 727.89 518.96 729.07 518.47 730.25 519.65 731.44 518.68 732.62 518.94 733.8 518.86 734.99 518.88 736.17 518.97 737.35 518.55 738.53 518.38 739.72 519.21 740.9 518.7 742.08 519.31 743.27 519.9 744.45 518.92 745.63 518.92 746.81 518.77 748 519.19 749.18 518.97 750.36 518.67 751.55 518.7 752.73 518.55 753.91 518.87 755.1 519.69 756.28 519.21 757.46 519.33 758.64 519.23 759.83 519.41 761.01 519.59 762.19 519.26 763.38 519.72 764.56 519.61 765.74 519.39 766.93 518.7 768.11 519.33 769.29 519.21 770.47 519.12 771.66 518.5 772.84 519.16 774.02 518.99 775.21 519.14 776.39 518.89 777.57 518.6 778.76 518.79 779.94 519.02 781.12 518.72 782.3 518.69 783.49 518.66 784.67 518.79 785.85 519.09 787.04 519.8 788.22 519.43 789.4 519.92 790.59 520 791.77 520 792.95 519.9 794.13 519.87 795.32 519.82 796.5 519.74 L796.5 523.2z" fill="#cfd6e6" opacity=".85"/>
<path d="M574.1 511.5V523.2M796.5 511.5V523.2" stroke="#8fa6d4" stroke-width=".5"/>
<rect x="573.3" y="515.2" width="1.6" height="4.4" rx="0.3" fill="#a7b7cc" stroke="#7f97c4" stroke-width="0.3"/>
<rect x="795.7" y="515.2" width="1.6" height="4.4" rx="0.3" fill="#a7b7cc" stroke="#7f97c4" stroke-width="0.3"/>
</g>
</svg>
</body></html>
